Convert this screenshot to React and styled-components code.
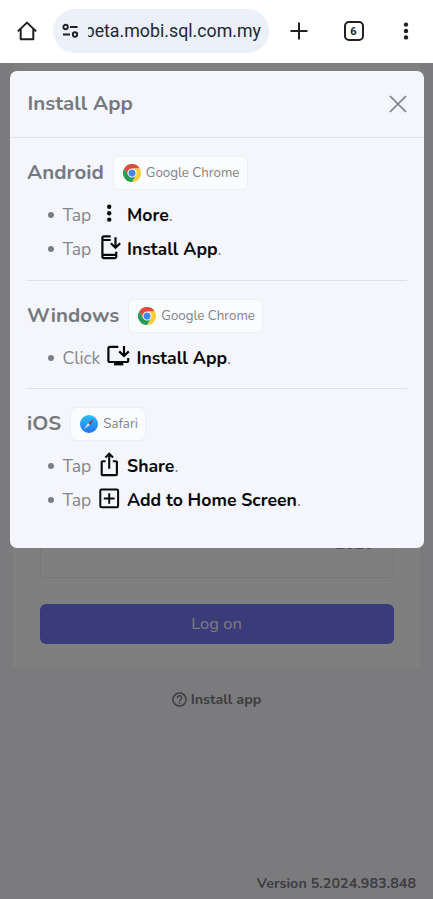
import React from "react";
import styled, { createGlobalStyle } from "styled-components";

const Global = createGlobalStyle`
  * { box-sizing: border-box; }
  body { margin: 0; background: #fff; font-family: "Nunito", "Open Sans", "Noto Sans", sans-serif; }
`;

const Screen = styled.div`
  width: 433px;
  height: 899px;
  display: flex;
  flex-direction: column;
  overflow: hidden;
`;

const BrowserBar = styled.header`
  height: 63px;
  flex: none;
  display: flex;
  align-items: center;
  padding: 0 0 1px 14px;
  background: #fff;
  color: #1f2024;
`;

const BarIcon = styled.span`
  display: flex;
  justify-content: center;
  align-items: center;
  width: ${(p) => p.$width}px;
  height: 28px;
`;

const AddressPill = styled.div`
  width: 216px;
  height: 44px;
  margin: 0 14px;
  padding: 0 8px;
  border-radius: 22px;
  background: #ecf0fa;
  display: flex;
  align-items: center;
  gap: 9px;
`;

const Address = styled.div`
  flex: 1;
  overflow: hidden;
  display: flex;
  justify-content: flex-end;
  white-space: nowrap;
  font: 400 17.8px/26px Roboto, sans-serif;
  color: #24272e;
`;

const TabCount = styled.span`
  width: 20px;
  height: 20px;
  border: 2px solid #1f2024;
  border-radius: 5px;
  display: flex;
  align-items: center;
  justify-content: center;
  font: 700 11px/1 Roboto, sans-serif;
`;

const Page = styled.main`
  position: relative;
  flex: 1;
  display: flex;
  flex-direction: column;
  background: #f7f7fa;
`;

const LoginCard = styled.section`
  height: 606px;
  margin: 0 13px;
  padding: 0 26.5px 25px;
  display: flex;
  flex-direction: column;
  justify-content: flex-end;
  background: #fff;
`;

const Field = styled.div`
  height: 60px;
  margin-bottom: 26px;
  padding: 13px 19px 0;
  border: 1px solid #efeff2;
  border-radius: 4px;
  text-align: right;
  font-size: 16px;
  font-weight: 600;
  line-height: 24px;
  color: #a0a0a6;
`;

const LogOnButton = styled.button`
  height: 40px;
  padding: 0 6px 1px;
  border: 0;
  border-radius: 6px;
  background: #7478f4;
  color: #f4f4ff;
  font-family: inherit;
  font-size: 16.5px;
`;

const InstallLink = styled.div`
  display: flex;
  justify-content: center;
  align-items: center;
  gap: 4px;
  margin-top: 20px;
  height: 20px;
  font-size: 14.3px;
  font-weight: 700;
  color: #7b7b80;
`;

const Version = styled.footer`
  margin: auto 17px 5px auto;
  font-size: 14.35px;
  line-height: 22px;
  font-weight: 700;
  color: #7b7b84;
`;

const Backdrop = styled.div`
  position: absolute;
  inset: 0;
  padding: 8px 9.5px 0 10px;
  background: rgba(0, 0, 0, 0.5);
`;

const Modal = styled.div`
  height: 477px;
  border-radius: 7px;
  background: #f5f6fb;
  color: #7b7f85;
`;

const ModalHeader = styled.div`
  height: 67px;
  padding: 0 17px 0 17.5px;
  display: flex;
  align-items: center;
  justify-content: space-between;
  border-bottom: 1px solid #e2e4e8;
`;

const Title = styled.h1`
  margin: 0;
  padding-bottom: 2px;
  font-size: 20.5px;
  line-height: 26px;
  font-weight: 700;
  color: #757a81;
`;

const Section = styled.section`
  margin: 0 17px;
  padding: 17.5px 0 ${(p) => p.$bottom}px;
  border-bottom: ${(p) => (p.$last ? "0" : "1px solid #dfe1e5")};
`;

const Heading = styled.div`
  display: flex;
  align-items: center;
  height: 34px;
  gap: 9px;
`;

const Badge = styled.span`
  width: ${(p) => p.$width}px;
  height: 34px;
  padding-left: 9px;
  display: flex;
  align-items: center;
  gap: 5px;
  border: 1px solid #eef0f3;
  border-radius: 6px;
  background: #fbfcfe;
  color: #808389;
  font-size: 13.3px;
  white-space: nowrap;
`;

const Steps = styled.ul`
  list-style: none;
  margin: 8px 0 0;
  padding: 0 0 0 21px;
`;

const Step = styled.li`
  display: flex;
  align-items: center;
  height: 34px;
  font-size: 17.5px;
  white-space: nowrap;
  &::before {
    content: "";
    width: 6px;
    height: 6px;
    margin-right: 8.5px;
    border-radius: 50%;
    background: #7b7e83;
  }
`;

const Verb = styled.span`
  width: ${(p) => p.$width}px;
  color: #84878c;
`;

const StepIcon = styled.span`
  display: flex;
  width: 24px;
  height: 28px;
  margin-right: 6px;
  align-items: center;
  justify-content: center;
  color: #08090b;
`;

const Target = styled.b`
  font-size: 17.65px;
  font-weight: 700;
  color: #08090b;
`;

const Svg = ({ w = 24, h = 24, box = "0 0 24 24", sw = 2, children }) => (
  <svg width={w} height={h} viewBox={box} fill="none" stroke="currentColor" strokeWidth={sw}>
    {children}
  </svg>
);

const ChromeLogo = () => (
  <svg width="18" height="18" viewBox="0 0 48 48">
    <path d="M3.2 12A24 24 0 0 1 44.8 12H24A12 12 0 0 0 13.6 30Z" fill="#dd4b3e" />
    <path d="M44.8 12A24 24 0 0 1 24 48L34.4 30A12 12 0 0 0 24 12Z" fill="#fccd3b" />
    <path d="M3.2 12A24 24 0 0 0 24 48L34.4 30A12 12 0 0 1 13.6 30Z" fill="#269b54" />
    <circle cx="24" cy="24" r="11" fill="#d5e3f6" />
    <circle cx="24" cy="24" r="9" fill="#4385ee" />
  </svg>
);

const SafariLogo = () => (
  <svg width="18" height="18" viewBox="0 0 18 18">
    <defs>
      <linearGradient id="safari" x2="0" y2="1">
        <stop stopColor="#27bdf5" />
        <stop offset="1" stopColor="#2675ed" />
      </linearGradient>
    </defs>
    <circle cx="9" cy="9" r="9" fill="url(#safari)" />
    <path d="M14 4 8 8l2 2Z" fill="#b04a5b" />
    <path d="M14 4 10 10 9 9Z" fill="#4b4568" />
    <path d="M4 14 8 8l2 2Z" fill="#cfe3fa" />
  </svg>
);

const dotCircles = (cx, cy) =>
  [-6.4, 0, 6.4].map((dy) => (
    <circle key={dy} cx={cx} cy={cy + dy} r="2.2" fill="currentColor" stroke="none" />
  ));

const MenuDots = () => <Svg w={6} h={20} box="0 0 6 20">{dotCircles(3, 10)}</Svg>;

const More = () => <Svg h={28} box="0 0 24 28">{dotCircles(12.2, 12.2)}</Svg>;

const PhoneInstall = () => (
  <Svg w={24} h={28} box="0 0 24 28" sw={2.2}>
    <path d="M13.7 1.4H7Q5.4 1.4 5.4 3V21.5Q5.4 23.1 7 23.1H17.6Q19.2 23.1 19.2 21.5V16.8M5.4 5H13.7M5.4 19.8H19.2" />
    <path d="M18.5 2.2V12M13.8 8.2 18.5 12.8 23.2 8.2" />
  </Svg>
);

const DesktopInstall = () => (
  <Svg w={24} h={28} box="0 0 24 28" sw={2.2}>
    <path d="M11.3 2.9H3Q1.4 2.9 1.4 4.5V16.4Q1.4 18 3 18H19.6Q21.2 18 21.2 16.4V14" />
    <path d="M17 2V11.4M12.2 7.4 17 12 21.8 7.4" />
    <path d="M7 19.9H16.3" strokeWidth="3" />
  </Svg>
);

const Share = () => (
  <Svg w={24} h={28} box="0 0 24 28" sw={2.1}>
    <path d="M8.6 9.2H5.6Q4.7 9.2 4.7 10.1V22.2Q4.7 23.1 5.6 23.1H19Q19.9 23.1 19.9 22.2V10.1Q19.9 9.2 19 9.2H15.8" />
    <path d="M12.2 16.8V2M8.4 5.6 12.2 1.8 16 5.6" />
  </Svg>
);

const AddSquare = () => (
  <Svg w={24} h={28} box="0 0 24 28">
    <rect x="3.3" y="3.5" width="17.8" height="17.8" rx="1.3" />
    <path d="M12.2 7.2V17.8M6.8 12.4H17.6" />
  </Svg>
);

const sections = [
  {
    name: "Android", badge: "Google Chrome", badgeWidth: 135, Logo: ChromeLogo, bottom: 14.5,
    steps: [
      { verb: "Tap", verbWidth: 34.5, Icon: More, target: "More" },
      { verb: "Tap", verbWidth: 34.5, Icon: PhoneInstall, target: "Install App" },
    ],
  },
  {
    name: "Windows", badge: "Google Chrome", badgeWidth: 135, Logo: ChromeLogo, bottom: 13.5,
    steps: [{ verb: "Click", verbWidth: 44, Icon: DesktopInstall, target: "Install App" }],
  },
  {
    name: "iOS", badge: "Safari", badgeWidth: 76, Logo: SafariLogo, bottom: 0, last: true,
    steps: [
      { verb: "Tap", verbWidth: 34.5, Icon: Share, target: "Share" },
      { verb: "Tap", verbWidth: 34.5, Icon: AddSquare, target: "Add to Home Screen" },
    ],
  },
];

const Guide = ({ name, badge, badgeWidth, Logo, bottom, last, steps }) => (
  <Section $bottom={bottom} $last={last}>
    <Heading>
      <Title as="h2">{name}</Title>
      <Badge $width={badgeWidth}>
        <Logo />
        {badge}
      </Badge>
    </Heading>
    <Steps>
      {steps.map(({ verb, verbWidth, Icon, target }) => (
        <Step key={target}>
          <Verb $width={verbWidth}>{verb}</Verb>
          <StepIcon><Icon /></StepIcon>
          <Target>{target}</Target>.
        </Step>
      ))}
    </Steps>
  </Section>
);

export default function App() {
  return (
    <Screen>
      <Global />
      <BrowserBar>
        <BarIcon $width={25}>
          <Svg w={22} h={22} box="0 0 22 22">
            <path d="M1.8 11.4 11 2.6 20.2 11.4M4.7 9.3V19.3H17.3V9.3" strokeLinejoin="round" />
          </Svg>
        </BarIcon>
        <AddressPill>
          <Svg w={18} h={16} box="0 0 18 16" sw={1.9}>
            <circle cx="4.6" cy="4" r="2.2" />
            <path d="M9 4H16.5M2 11.5H9" />
            <circle cx="14" cy="11.5" r="2.2" />
          </Svg>
          <Address>beta.mobi.sql.com.my</Address>
        </AddressPill>
        <BarIcon $width={31}>
          <Svg w={18} h={18} box="0 0 18 18"><path d="M9 0.5V17.5M0.5 9H17.5" /></Svg>
        </BarIcon>
        <BarIcon $width={79}><TabCount>6</TabCount></BarIcon>
        <BarIcon $width={26}><MenuDots /></BarIcon>
      </BrowserBar>
      <Page>
        <LoginCard>
          <Field>2020</Field>
          <LogOnButton>Log on</LogOnButton>
        </LoginCard>
        <InstallLink>
          <Svg w={15} h={15} sw={2.4}>
            <circle cx="12" cy="12" r="10.5" />
            <path d="M8.5 9.5a3.5 3.5 0 1 1 5 3.1q-1.5.8-1.5 2.2M12 16.8v2.2" />
          </Svg>
          Install app
        </InstallLink>
        <Version>Version 5.2024.983.848</Version>
        <Backdrop>
          <Modal>
            <ModalHeader>
              <Title>Install App</Title>
              <Svg w={18} h={18} box="0 0 18 18" sw={1.7}><path d="M1 1 17 17M17 1 1 17" /></Svg>
            </ModalHeader>
            {sections.map((s) => <Guide key={s.name} {...s} />)}
          </Modal>
        </Backdrop>
      </Page>
    </Screen>
  );
}
